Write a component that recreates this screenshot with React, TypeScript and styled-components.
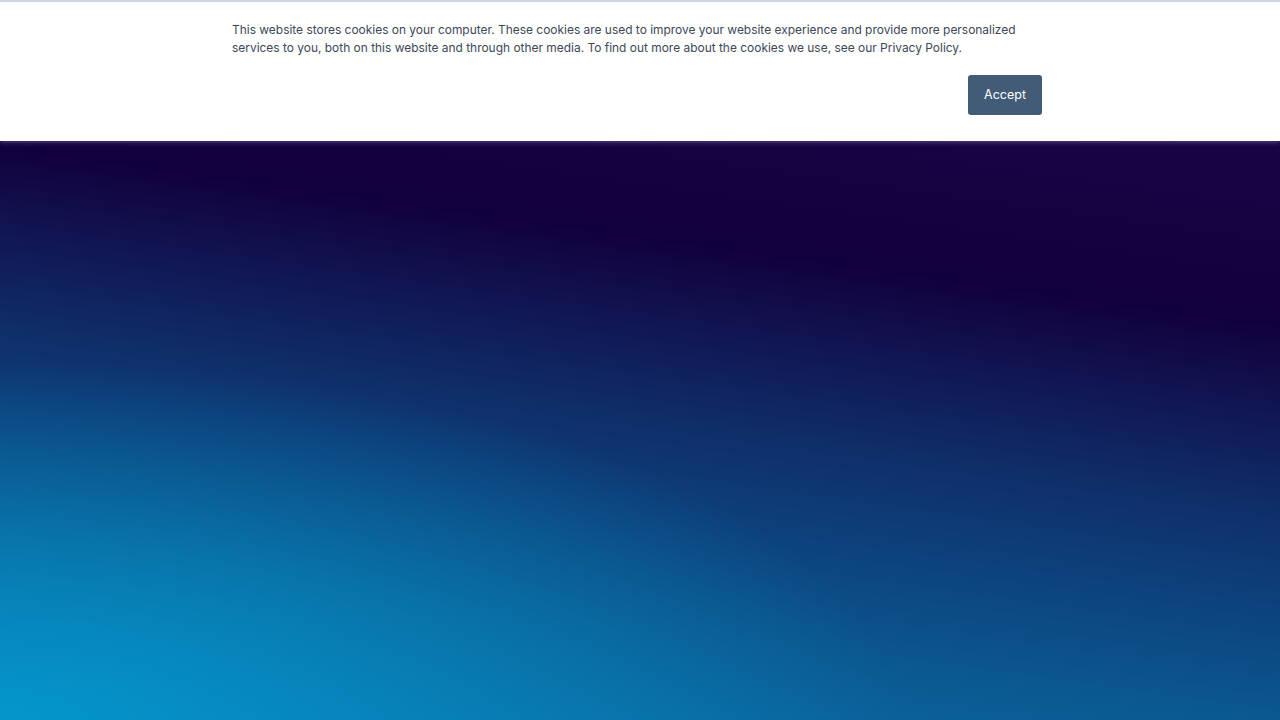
import React from "react";
import styled, { createGlobalStyle } from "styled-components";

const GlobalStyle = createGlobalStyle`
  html, body {
    margin: 0;
    padding: 0;
  }
  body {
    font-family: Inter, "Noto Sans", sans-serif;
  }
`;

const StyledPage = styled.div`
  position: relative;
  min-height: 100vh;
  background:
    radial-gradient(ellipse 900px 360px at 0% 100%, rgba(3, 156, 208, 0.85) 0%, rgba(3, 156, 208, 0) 100%),
    linear-gradient(188deg, #1a0749 0%, #170444 20%, #12003d 36%, #0f2d69 56%, #0b5890 80%, #0a74b0 100%);
`;

const StyledBanner = styled.div`
  position: absolute;
  top: 0;
  left: 0;
  right: 0;
  background: #ffffff;
  border-top: 2px solid #cad5e1;
  box-shadow: 0 1px 5px rgba(140, 120, 190, 0.6);
`;

const StyledInner = styled.div`
  max-width: 816px;
  margin: 0 auto;
  padding: 19px 6px 26px 0;
  box-sizing: border-box;
  display: flex;
  flex-direction: column;
`;

const StyledText = styled.p`
  margin: 0;
  font-size: 11.95px;
  line-height: 18px;
  color: #3d4858;
`;

const StyledActions = styled.div`
  display: flex;
  justify-content: flex-end;
  margin-top: 18px;
`;

const StyledButton = styled.button`
  height: 40px;
  width: 74px;
  padding: 0 0 1px;
  border: none;
  border-radius: 3px;
  background: #425b76;
  color: #ffffff;
  font-family: Inter, "Noto Sans", sans-serif;
  font-size: 12.5px;
  cursor: pointer;
`;

const App = () => {
  return (
    <>
      <GlobalStyle />
      <StyledPage>
        <StyledBanner>
          <StyledInner>
            <StyledText>
              This website stores cookies on your computer. These cookies are used to improve your
              website experience and provide more personalized services to you, both on this website
              and through other media. To find out more about the cookies we use, see our Privacy
              Policy.
            </StyledText>
            <StyledActions>
              <StyledButton>Accept</StyledButton>
            </StyledActions>
          </StyledInner>
        </StyledBanner>
      </StyledPage>
    </>
  );
};

export default App;
